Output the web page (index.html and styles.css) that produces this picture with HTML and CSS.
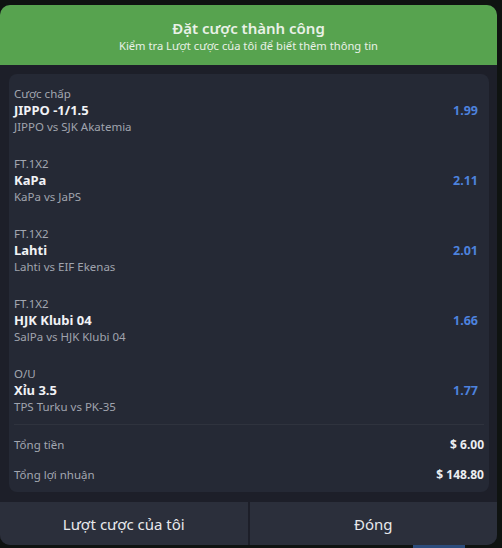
FILE: index.html
```html
<!DOCTYPE html>
<html lang="vi">
<head>
    <meta charset="UTF-8">
    <meta name="viewport" content="width=device-width, initial-scale=1.0">
    <title>Đặt cược thành công</title>
    <link rel="stylesheet" href="styles.css">
</head>
<body>
    <div class="backdrop-tab"></div>
    <div class="modal">
        <div class="modal-header">
            <div class="modal-title">Đặt cược thành công</div>
            <div class="modal-subtitle">Kiểm tra Lượt cược của tôi để biết thêm thông tin</div>
        </div>
        <div class="modal-body">
            <div class="bet-card">
                <div class="bet-item">
                    <div class="bet-info">
                        <div class="bet-type">Cược chấp</div>
                        <div class="bet-pick">JIPPO -1/1.5</div>
                        <div class="bet-match">JIPPO vs SJK Akatemia</div>
                    </div>
                    <div class="bet-odds">1.99</div>
                </div>
                <div class="bet-item">
                    <div class="bet-info">
                        <div class="bet-type">FT.1X2</div>
                        <div class="bet-pick">KaPa</div>
                        <div class="bet-match">KaPa vs JaPS</div>
                    </div>
                    <div class="bet-odds">2.11</div>
                </div>
                <div class="bet-item">
                    <div class="bet-info">
                        <div class="bet-type">FT.1X2</div>
                        <div class="bet-pick">Lahti</div>
                        <div class="bet-match">Lahti vs EIF Ekenas</div>
                    </div>
                    <div class="bet-odds">2.01</div>
                </div>
                <div class="bet-item">
                    <div class="bet-info">
                        <div class="bet-type">FT.1X2</div>
                        <div class="bet-pick">HJK Klubi 04</div>
                        <div class="bet-match">SalPa vs HJK Klubi 04</div>
                    </div>
                    <div class="bet-odds">1.66</div>
                </div>
                <div class="bet-item">
                    <div class="bet-info">
                        <div class="bet-type">O/U</div>
                        <div class="bet-pick">Xỉu 3.5</div>
                        <div class="bet-match">TPS Turku vs PK-35</div>
                    </div>
                    <div class="bet-odds">1.77</div>
                </div>
                <div class="totals">
                    <div class="total-row">
                        <span class="total-label">Tổng tiền</span>
                        <span class="total-value">$ 6.00</span>
                    </div>
                    <div class="total-row">
                        <span class="total-label">Tổng lợi nhuận</span>
                        <span class="total-value">$ 148.80</span>
                    </div>
                </div>
            </div>
        </div>
        <div class="modal-footer">
            <button class="footer-btn">Lượt cược của tôi</button>
            <button class="footer-btn">Đóng</button>
        </div>
    </div>
</body>
</html>
```

FILE: styles.css
```css
body {
    margin: 0;
    padding: 5px 0 0;
    height: 548px;
    box-sizing: border-box;
    overflow: hidden;
    position: relative;
    background-color: #0f1311;
    font-family: "Noto Sans", "Open Sans", sans-serif;
}
.backdrop-tab {
    position: absolute;
    left: 413px;
    bottom: 0;
    width: 52px;
    height: 6px;
    background: #2c4c7c;
    border-radius: 3px 3px 0 0;
}
.modal {
    position: relative;
    width: 497px;
    background: #1d1f29;
    border-radius: 10px;
    overflow: hidden;
}
.modal-header {
    height: 60px;
    background: #57a34f;
    display: flex;
    flex-direction: column;
    align-items: center;
    justify-content: center;
    color: #e9f1e7;
}
.modal-title {
    font-size: 15px;
    font-weight: 600;
    line-height: 20px;
    margin-top: 1px;
}
.modal-subtitle {
    font-size: 11.2px;
    line-height: 16px;
}
.modal-body {
    padding: 9px 8px 10px 9px;
}
.bet-card {
    background: #252935;
    border-radius: 8px;
    padding: 0 5px;
}
.bet-item {
    display: flex;
    align-items: center;
    justify-content: space-between;
    height: 70px;
    box-sizing: border-box;
    padding: 12px 0 9px;
}
.bet-type {
    font-size: 11.5px;
    line-height: 16px;
    color: #a3a7b1;
}
.bet-pick {
    font-size: 13px;
    font-weight: 700;
    line-height: 17px;
    color: #f1f2f5;
}
.bet-match {
    font-size: 11.5px;
    line-height: 16px;
    color: #a0a4ae;
}
.bet-odds {
    font-size: 12.5px;
    font-weight: 700;
    color: #4d82dd;
    margin-right: 6px;
}
.totals {
    border-top: 1px solid #2f333e;
    padding: 4px 0 3px;
}
.total-row {
    display: flex;
    justify-content: space-between;
    align-items: center;
    height: 30px;
}
.total-label {
    font-size: 11.5px;
    color: #a3a7b1;
}
.total-value {
    font-size: 12px;
    font-weight: 700;
    color: #eceef1;
}
.modal-footer {
    display: flex;
    gap: 2px;
    background: #1d1f29;
}
.footer-btn {
    flex: 1;
    height: 43px;
    border: none;
    background: #2b2f3b;
    color: #e8e9ec;
    font-family: inherit;
    font-size: 15px;
}
```
